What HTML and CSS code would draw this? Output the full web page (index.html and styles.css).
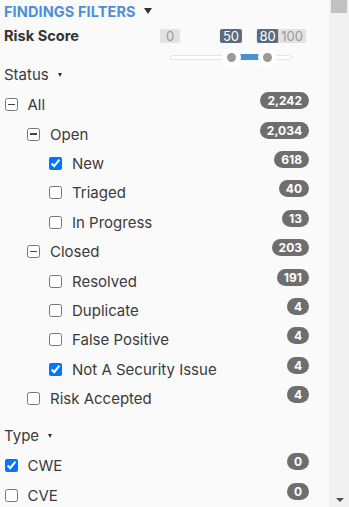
FILE: index.html
```html
<!DOCTYPE html>
<html lang="en">
<head>
<meta charset="utf-8">
<title>Findings Filters</title>
<link rel="stylesheet" href="styles.css">
</head>
<body>
<div class="page">
  <div class="panel">
    <div class="title">
      <span class="title-text">Findings Filters</span>
      <span class="caret-lg"></span>
    </div>

    <div class="risk">
      <div class="risk-label">Risk Score</div>
      <div class="range">
        <div class="range-labels">
          <span class="rl rl-off" style="left:0%">0</span>
          <span class="rl rl-on" style="left:50%">50</span>
          <span class="rl rl-on" style="left:80%">80</span>
          <span class="rl rl-off" style="left:100%">100</span>
        </div>
        <div class="range-slider">
          <div class="track"></div>
          <div class="fill" style="left:50%;width:30%"></div>
          <span class="handle" style="left:50%"></span>
          <span class="handle" style="left:80%"></span>
        </div>
      </div>
    </div>

    <div class="section">Status <span class="caret-sm"></span></div>

    <ul class="tree">
      <li class="row lv0"><span class="box box-ind"></span><span class="label">All</span><span class="badge">2,242</span></li>
      <li class="row lv1"><span class="box box-ind"></span><span class="label">Open</span><span class="badge">2,034</span></li>
      <li class="row lv2"><input class="cb" type="checkbox" checked><span class="label">New</span><span class="badge">618</span></li>
      <li class="row lv2"><input class="cb" type="checkbox"><span class="label">Triaged</span><span class="badge">40</span></li>
      <li class="row lv2"><input class="cb" type="checkbox"><span class="label">In Progress</span><span class="badge">13</span></li>
      <li class="row lv1"><span class="box box-ind"></span><span class="label">Closed</span><span class="badge">203</span></li>
      <li class="row lv2"><input class="cb" type="checkbox"><span class="label">Resolved</span><span class="badge">191</span></li>
      <li class="row lv2"><input class="cb" type="checkbox"><span class="label">Duplicate</span><span class="badge">4</span></li>
      <li class="row lv2"><input class="cb" type="checkbox"><span class="label">False Positive</span><span class="badge">4</span></li>
      <li class="row lv2"><input class="cb" type="checkbox" checked><span class="label">Not A Security Issue</span><span class="badge">4</span></li>
      <li class="row lv1"><input class="cb" type="checkbox"><span class="label">Risk Accepted</span><span class="badge">4</span></li>
    </ul>

    <div class="section section-type">Type <span class="caret-sm"></span></div>

    <ul class="tree">
      <li class="row lv0"><input class="cb" type="checkbox" checked><span class="label">CWE</span><span class="badge">0</span></li>
      <li class="row lv0"><input class="cb" type="checkbox"><span class="label">CVE</span><span class="badge">0</span></li>
    </ul>
  </div>

  <div class="scrollbar">
    <div class="thumb"></div>
    <div class="sb-space"></div>
    <div class="sb-arrow"></div>
  </div>
</div>
</body>
</html>
```

FILE: styles.css
```css
* {
  box-sizing: border-box;
}

html, body {
  margin: 0;
  height: 100%;
  overflow: hidden;
}

body {
  font-family: Inter, "Liberation Sans", sans-serif;
  font-size: 15px;
  color: #3a3a3a;
  background: #fafafa;
}

.page {
  display: flex;
  height: 100vh;
}

.panel {
  flex: 1;
  min-width: 0;
  padding: 0 20px 0 4px;
  background: #fafafa;
}

/* header */
.title {
  display: flex;
  align-items: center;
  height: 22px;
}

.title-text {
  text-transform: uppercase;
  font-weight: 700;
  font-size: 14.5px;
  color: #4a90d9;
  letter-spacing: 0.1px;
}

.caret-lg {
  width: 0;
  height: 0;
  margin-left: 8px;
  border-left: 4px solid transparent;
  border-right: 4px solid transparent;
  border-top: 6px solid #333;
}

/* risk score */
.risk {
  display: flex;
  justify-content: space-between;
  align-items: flex-start;
  margin-top: 4px;
  height: 38px;
}

.risk-label {
  font-weight: 700;
  font-size: 14.6px;
  line-height: 20px;
  color: #333;
}

.range {
  width: 122px;
  margin-right: 17px;
}

.range-labels {
  position: relative;
  height: 20px;
}

.rl {
  position: absolute;
  top: 2.5px;
  transform: translateX(-50%);
  height: 14.5px;
  line-height: 14.5px;
  padding: 0 3px;
  min-width: 20px;
  text-align: center;
  font-size: 13px;
  border-radius: 2px;
}

.rl-off {
  background: #e2e2e2;
  color: #9a9a9a;
}

.rl-on {
  background: #5c6b7d;
  color: #fff;
}

.range-slider {
  position: relative;
  margin-top: 5px;
  height: 12px;
}

.track {
  position: absolute;
  left: 0;
  right: 0;
  top: 3.5px;
  height: 5px;
  background: #fff;
  border: 1px solid #e4e4e4;
  border-radius: 3px;
}

.fill {
  position: absolute;
  top: 2.5px;
  height: 6px;
  background: #4a90d9;
}

.handle {
  position: absolute;
  top: 6px;
  width: 19px;
  height: 19px;
  margin: -9.5px 0 0 -9.5px;
  border-radius: 50%;
  background: #fff;
}

.handle::after {
  content: "";
  position: absolute;
  left: 5px;
  top: 5px;
  width: 9px;
  height: 9px;
  border-radius: 50%;
  background: #9a9a9a;
}

/* sections */
.section {
  display: flex;
  align-items: center;
  height: 20px;
}

.section-type {
  margin-top: 12px;
}

.caret-sm {
  width: 0;
  height: 0;
  margin-left: 9px;
  margin-top: 1px;
  border-left: 2.5px solid transparent;
  border-right: 2.5px solid transparent;
  border-top: 4px solid #333;
}

/* tree rows */
.tree {
  list-style: none;
  margin: 6px 0 0;
  padding: 0;
}

.row {
  display: flex;
  align-items: center;
  height: 29.4px;
}

.lv0 { padding-left: 0.5px; }
.lv1 { padding-left: 23px; }
.lv2 { padding-left: 45px; }

.cb {
  margin: 0;
  width: 13px;
  height: 13px;
  flex: none;
}

.box {
  flex: none;
  width: 13px;
  height: 13px;
  border: 1px solid #767676;
  border-radius: 2.5px;
  background: #fff;
  display: flex;
  align-items: center;
  justify-content: center;
}

.box-ind::after {
  content: "";
  width: 7px;
  height: 1.6px;
  background: #444;
}

.label {
  margin-left: 10px;
  flex: 1;
  white-space: nowrap;
}

.badge {
  flex: none;
  margin-bottom: 8px;
  height: 17px;
  line-height: 17px;
  padding: 0 7px;
  border-radius: 9px;
  background: #6e6e6e;
  color: #fff;
  font-size: 12px;
  font-weight: 700;
}

/* fake scrollbar */
.scrollbar {
  width: 20px;
  flex: none;
  display: flex;
  flex-direction: column;
  align-items: center;
  background: #f1f1f1;
}

.thumb {
  width: 16px;
  height: 13px;
  background: #c1c1c1;
}

.sb-space {
  flex: 1;
}

.sb-arrow {
  width: 0;
  height: 0;
  margin-bottom: 5px;
  margin-left: 1px;
  border-left: 4px solid transparent;
  border-right: 4px solid transparent;
  border-top: 4px solid #505050;
}
```
